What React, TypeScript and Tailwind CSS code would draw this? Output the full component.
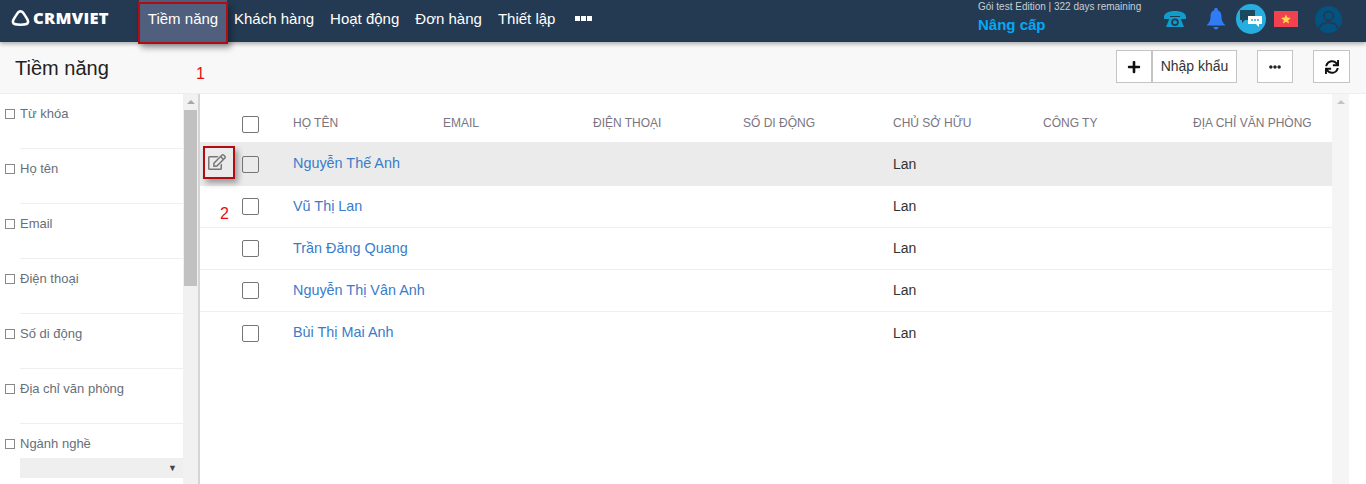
import { FaEllipsisH, FaPlus, FaRegEdit, FaSync } from 'react-icons/fa';

const menu = ['Khách hàng', 'Hoạt động', 'Đơn hàng', 'Thiết lập'];
const filters = ['Từ khóa', 'Họ tên', 'Email', 'Điện thoại', 'Số di động', 'Địa chỉ văn phòng'];
const columns = ['Email', 'Điện thoại', 'Số di động', 'Chủ sở hữu', 'Công ty'];
const people = ['Nguyễn Thế Anh', 'Vũ Thị Lan', 'Trần Đăng Quang', 'Nguyễn Thị Vân Anh', 'Bùi Thị Mai Anh'];

function Logo() {
  return (
    <svg width="19" height="18" viewBox="0 0 20 18" fill="none" stroke="#fff" strokeWidth="2.6" strokeLinejoin="round">
      <path d="M10 2 C12 2 13 3.500 14.500 6 C16 8.500 18.500 11 18 13.500 C17.500 16 15 16 10 16 C5 16 2.500 16 2 13.500 C1.500 11 4 8.500 5.500 6 C7 3.500 8 2 10 2 Z" />
    </svg>
  );
}

function HeaderIcons() {
  return (
    <div className="flex items-center">
      <svg width="24" height="18" viewBox="0 0 24 18" fill="#0f9dc9">
        <path d="M1 7 C1 3 6 1 12 1 C18 1 23 3 23 7 L23 9 L17 9 L17 6 L7 6 L7 9 L1 9 Z" />
        <path fillRule="evenodd" d="M7 7 L17 7 L21 17 L3 17 Z M12 8.500 A3.800 3.800 0 1 0 12 16.100 A3.800 3.800 0 1 0 12 8.500 Z" />
        <circle cx="12" cy="12.300" r="2" />
      </svg>
      <svg className="ml-[19px]" width="20" height="24" viewBox="0 0 20 24" fill="#2f7cf6">
        <circle cx="10" cy="2.500" r="1.800" />
        <path d="M10 3 C14 3 15.500 6 15.500 10 C15.500 14 17 16 19.500 18.500 L0.500 18.500 C3 16 4.500 14 4.500 10 C4.500 6 6 3 10 3 Z" />
        <path d="M7.500 20 L12.500 20 C12.500 21.500 11 22.500 10 22.500 C9 22.500 7.500 21.500 7.500 20 Z" />
      </svg>
      <div className="ml-[10px] flex h-[30px] w-[30px] items-center justify-center rounded-full bg-[#27aee0]">
        <svg width="24" height="20" viewBox="0 0 24 20">
          <path d="M1 1 H16 V11 H6 L3 14 V11 H1 Z" fill="#1b4a5e" />
          <path d="M9 7 H23 V15 H20 V18 L17 15 H9 Z" fill="#fff" />
          <circle cx="13" cy="11" r="1" fill="#27aee0" />
          <circle cx="16" cy="11" r="1" fill="#27aee0" />
          <circle cx="19" cy="11" r="1" fill="#27aee0" />
        </svg>
      </div>
      <div className="ml-2 flex h-4 w-6 items-center justify-center bg-[#f0424f]">
        <svg width="10" height="10" viewBox="0 0 24 24" fill="#ffd84d">
          <path d="M12 1 L15.300 8.500 L23.500 9.300 L17.300 14.700 L19.100 22.800 L12 18.600 L4.900 22.800 L6.700 14.700 L0.500 9.300 L8.700 8.500 Z" />
        </svg>
      </div>
      <svg className="ml-[17px]" width="27" height="27" viewBox="0 0 27 27">
        <circle cx="13.500" cy="13.500" r="13.500" fill="#04527f" />
        <circle cx="13.500" cy="10" r="4.600" fill="none" stroke="#24394f" strokeWidth="1.600" />
        <path d="M4 23 C5 18 9 16.500 13.500 16.500 C18 16.500 22 18 23 23" fill="none" stroke="#24394f" strokeWidth="1.600" />
      </svg>
    </div>
  );
}

function Filter({ label }: { label: string }) {
  return (
    <div className="relative ml-5 h-[55px] border-b border-[#eeeeee]">
      <div className="-ml-[15px] flex items-center gap-[5px] pt-[11px] text-[13px] leading-[18px] text-[#666f7a]">
        <span className="h-[10px] w-[10px] border border-[#888888] bg-white" />
        {label}
      </div>
    </div>
  );
}

export default function App() {
  return (
    <div className="relative h-[484px] w-[1366px] overflow-hidden bg-white font-['Liberation_Sans',Arial,sans-serif] text-[14px] text-[#333333]">
      {/* Top bar */}
      <header className="relative z-10 flex h-[42px] items-center bg-[#243a52] shadow-[0_2px_4px_rgba(0,0,0,0.3)]">
        <div className="ml-[11px] flex w-[128px] items-center gap-[3px] pb-[6px]">
          <Logo />
          <span className="font-['Open_Sans',sans-serif] text-[16.5px] font-extrabold leading-none tracking-[0.3px] text-white">
            CRMVIET
          </span>
        </div>
        <div className="flex h-[42px] w-[88px] items-start justify-center bg-[#4f5f7d] pt-[10px] text-[15px] leading-[18px] text-white">
          Tiềm năng
        </div>
        <nav className="ml-[7px] flex items-start gap-4 self-start pt-[10px] text-[15px] leading-[18px] text-white">
          {menu.map((m) => (
            <span key={m}>{m}</span>
          ))}
        </nav>
        <div className="ml-5 mb-[5px] flex gap-[1px]">
          <span className="h-[5px] w-[5px] bg-white" />
          <span className="h-[5px] w-[5px] bg-white" />
          <span className="h-[5px] w-[5px] bg-white" />
        </div>
        <div className="absolute left-[978px] top-0 flex flex-col">
          <span className="text-[10px] leading-[14px] text-[#c9ced4]">Gói test Edition | 322 days remaining</span>
          <span className="mt-[2px] text-[15px] font-bold leading-[18px] text-[#03a9f4]">Nâng cấp</span>
        </div>
        <div className="absolute right-[24px] top-[4px]">
          <HeaderIcons />
        </div>
      </header>

      {/* Page title row */}
      <div className="flex h-[52px] items-start border-b border-[#eeeeee] bg-[#f8f8f8] pl-[15px] pr-4 pt-2">
        <h1 className="mt-[6px] text-[20px] font-normal leading-6 text-[#222222]">Tiềm năng</h1>
        <div className="ml-auto flex items-center">
          <button className="flex h-[33px] w-[36px] items-center justify-center border border-[#c4c4c4] bg-white">
            <FaPlus size={14} className="text-[#111111]" />
          </button>
          <button className="h-[33px] w-[85px] border border-[#c4c4c4] bg-white text-[14px] text-[#333333]">
            Nhập khẩu
          </button>
          <button className="ml-5 flex h-[33px] w-[36px] items-center justify-center border border-[#c4c4c4] bg-white">
            <FaEllipsisH size={12} className="text-[#222222]" />
          </button>
          <button className="ml-5 flex h-[33px] w-[37px] items-center justify-center border border-[#c4c4c4] bg-white">
            <FaSync size={14} className="text-[#111111]" />
          </button>
        </div>
      </div>

      <div className="flex h-[390px]">
        {/* Filter sidebar */}
        <aside className="flex w-[200px] shrink-0 border-r-2 border-[#d5d5d5]">
          <div className="w-[183px] shrink-0">
            {filters.map((f) => (
              <Filter key={f} label={f} />
            ))}
            <div className="flex items-center gap-[5px] pl-[5px] pt-[11px] text-[13px] leading-[18px] text-[#666f7a]">
              <span className="h-[10px] w-[10px] border border-[#888888] bg-white" />
              Ngành nghề
            </div>
            <div className="ml-5 mt-[5px] flex h-5 items-center justify-end bg-[#efefef] pr-[6px]">
              <span className="text-[9px] leading-none text-[#444444]">▼</span>
            </div>
          </div>
          <div className="flex w-[15px] flex-col bg-[#f1f1f1]">
            <div className="flex h-[16px] items-center justify-center">
              <span className="h-0 w-0 border-x-[4px] border-b-[4px] border-x-transparent border-b-[#a8a8a8]" />
            </div>
            <div className="ml-[1px] h-[176px] w-[13px] bg-[#c1c1c1]" />
          </div>
        </aside>

        {/* Leads table */}
        <main className="w-[1132px] shrink-0">
          <div className="flex h-[48px] items-start pt-[22px]">
            <span className="ml-[42px] h-[17px] w-[17px] rounded-[2px] border border-[#767676] bg-white" />
            <div className="ml-[34px] flex text-[12px] uppercase leading-[14px] text-[#7a7480]">
              <span className="w-[150px]">Họ tên</span>
              {columns.map((c) => (
                <span key={c} className="w-[150px]">
                  {c}
                </span>
              ))}
              <span>Địa chỉ văn phòng</span>
            </div>
          </div>
          {people.map((name, i) => (
            <div
              key={name}
              className={
                i === 0
                  ? 'flex h-[44px] items-center bg-[#ebebeb]'
                  : i === people.length - 1
                    ? 'flex h-[42px] items-center bg-white'
                    : 'flex h-[42px] items-center border-b border-[#eeeeee] bg-white'
              }
            >
              <div className="flex w-[42px] justify-center">
                {i === 0 && <FaRegEdit size={18} className="mb-[4px] ml-[-8px] text-[#777777]" />}
              </div>
              <span className="h-[17px] w-[17px] rounded-[2px] border border-[#767676]" />
              <span className="ml-[34px] w-[600px] text-[14.4px] text-[#3a7cc9]">{name}</span>
              <span className="text-[#333333]">Lan</span>
            </div>
          ))}
        </main>
        <div className="flex w-[17px] shrink-0 justify-center bg-[#f5f5f5] pt-[6px]">
          <span className="h-0 w-0 border-x-[4px] border-b-[4px] border-x-transparent border-b-[#c4c4c4]" />
        </div>
      </div>

      {/* Tutorial annotations drawn over the page */}
      <div className="absolute left-[138px] top-[2px] z-20 h-[42px] w-[90px] border-[2px] border-[#b00d12] shadow-[3px_4px_6px_rgba(0,0,0,0.35)]" />
      <span className="absolute left-[196px] top-[65px] z-20 text-[16px] leading-[18px] text-[#e01010]">1</span>
      <div className="absolute left-[203px] top-[146px] z-20 h-[33px] w-[32px] border-[2px] border-[#b00d12] shadow-[3px_4px_6px_rgba(0,0,0,0.35)]" />
      <span className="absolute left-[220px] top-[205px] z-20 text-[16px] leading-[18px] text-[#e01010]">2</span>
    </div>
  );
}
